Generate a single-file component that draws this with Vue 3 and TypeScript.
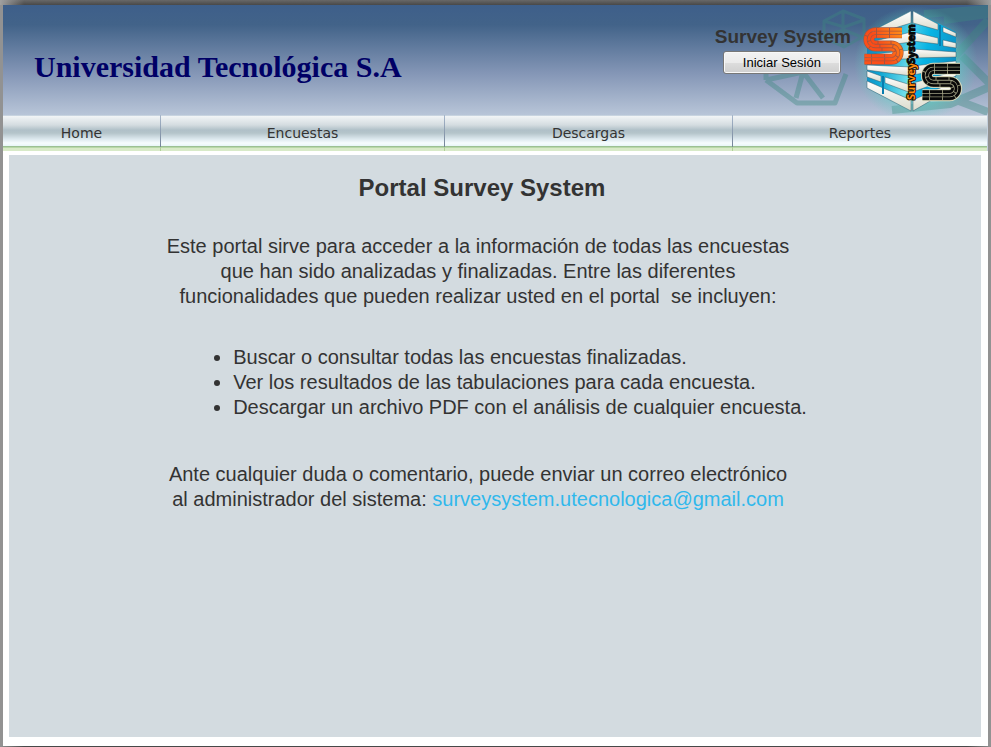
<script setup lang="ts">
interface NavItem {
  label: string
  href: string
}

const navItems: NavItem[] = [
  { label: 'Home', href: '#home' },
  { label: 'Encuestas', href: '#encuestas' },
  { label: 'Descargas', href: '#descargas' },
  { label: 'Reportes', href: '#reportes' },
]

const features: string[] = [
  'Buscar o consultar todas las encuestas finalizadas.',
  'Ver los resultados de las tabulaciones para cada encuesta.',
  'Descargar un archivo PDF con el análisis de cualquier encuesta.',
]

// The three parallel lanes that make up each "S" of the logo
const lanes: string[] = [
  'M902 29.3H875.5A10.1 10.1 0 0 0 875.5 49.5H891.5A3.1 3.1 0 0 1 891.5 55.7H864.5',
  'M902 32.8H875.5A6.6 6.6 0 0 0 875.5 46H891.5A6.6 6.6 0 0 1 891.5 59.2H864.5',
  'M902 36.3H875.5A3.1 3.1 0 0 0 875.5 42.5H891.5A10.1 10.1 0 0 1 891.5 62.7H864.5',
]
</script>

<template>
  <div class="page">
    <header class="banner">
      <h1 class="university">Universidad Tecnológica S.A</h1>
      <div class="session">
        <strong class="system">Survey System</strong>
        <button type="button" class="login">Iniciar Sesión</button>
      </div>
      <svg class="art" viewBox="760 5 228 110" aria-hidden="true">
        <defs>
          <linearGradient id="orange" gradientUnits="userSpaceOnUse" x1="864" y1="56" x2="903" y2="36">
            <stop offset="0" stop-color="#ff5216" />
            <stop offset="0.4" stop-color="#fa4a18" />
            <stop offset="1" stop-color="#ff8c18" />
          </linearGradient>
          <linearGradient id="glassLeft" x1="0" y1="0" x2="1" y2="0.5">
            <stop offset="0" stop-color="#1478b4" />
            <stop offset="0.5" stop-color="#10a8d4" />
            <stop offset="1" stop-color="#6cdcea" />
          </linearGradient>
          <linearGradient id="glassRight" x1="0" y1="0" x2="1" y2="0.6">
            <stop offset="0" stop-color="#58d4ea" />
            <stop offset="0.4" stop-color="#08b4e4" />
            <stop offset="1" stop-color="#108cc0" />
          </linearGradient>
          <linearGradient id="slat" x1="0" y1="0" x2="0" y2="1">
            <stop offset="0" stop-color="#ffffff" />
            <stop offset="1" stop-color="#dcdccc" />
          </linearGradient>
          <radialGradient id="glow">
            <stop offset="0.5" stop-color="#5ce0d8" stop-opacity="0.8" />
            <stop offset="1" stop-color="#5cc8b8" stop-opacity="0" />
          </radialGradient>
          <filter id="soft"><feGaussianBlur stdDeviation="0.7" /></filter>
        </defs>
        <g class="frames" filter="url(#soft)">
          <path d="M824 21L843 11L864 19V36L844 47L824 38ZM824 21L844 27L864 20M843 11V45M824 36L844 30L864 38" stroke-width="3" />
          <path d="M774 54L806 58V72L788 66ZM806 56L830 66" stroke-width="4" />
          <path d="M766 80L797 103H835L846 74M766 80L803 72L823 98M803 72L796 98M766 80V73" stroke-width="5" />
          <path d="M924 14L988 9M944 20L988 14M988 20L948 64M962 56L992 86L950 104L892 110M930 90L988 112" stroke-width="8" />
        </g>
        <ellipse cx="916" cy="64" rx="62" ry="58" fill="url(#glow)" />
        <path d="M911 11L867 33V88L911 111Z" fill="url(#glassLeft)" />
        <path d="M913 11L956 32V85L913 111Z" fill="url(#glassRight)" />
        <g fill="url(#slat)" stroke="#305868" stroke-width="0.5">
          <path d="M911 11V23L872 35V31Z" />
          <path d="M911 32V42L867 48V43Z" />
          <path d="M911 50V59L867 59V55Z" />
          <path d="M911 67V76L867 70V65Z" />
          <path d="M911 85V93L885 83V77Z" />
          <path d="M881 76V82L867 77V71Z" />
          <path d="M911 100V111L867 88V81Z" />
          <path d="M913 11L938 24V30L913 23Z" />
          <path d="M943 27L956 33V37L943 32Z" />
          <path d="M913 32L938 38V44L913 41Z" />
          <path d="M943 40L956 43V48L943 46Z" />
          <path d="M913 49L956 52V57L913 58Z" />
          <path d="M913 66L956 61V67L913 75Z" />
          <path d="M913 83L956 71V76L913 92Z" />
          <path d="M913 100L956 81V86L913 111Z" />
        </g>
        <path d="M883 76V94M940 25V46" stroke="#087cae" stroke-width="2" />
        <g fill="none">
          <path v-for="lane in lanes" :key="lane" :d="lane" stroke="#a8543c" stroke-width="4" />
          <path v-for="lane in lanes" :key="lane" :d="lane" stroke="url(#orange)" stroke-width="2.7" stroke-dasharray="12 1" />
        </g>
        <g fill="none" transform="translate(58 36)">
          <path v-for="lane in lanes" :key="lane" :d="lane" stroke="#e4e4c8" stroke-width="5" />
          <path v-for="lane in lanes" :key="lane" :d="lane" stroke="#8c8c70" stroke-width="3.5" />
          <path v-for="lane in lanes" :key="lane" :d="lane" stroke="#080808" stroke-width="2.7" stroke-dasharray="12 1" />
        </g>
        <g class="mark" transform="translate(915 100) rotate(-90)">
          <text class="mark-survey">Survey</text>
          <text class="mark-system" x="36">System</text>
        </g>
      </svg>
    </header>

    <nav class="menu" aria-label="Principal">
      <a v-for="item in navItems" :key="item.label" :href="item.href">{{ item.label }}</a>
    </nav>

    <main class="content">
      <h2>Portal Survey System</h2>
      <div class="copy">
        <p>
          Este portal sirve para acceder a la información de todas las encuestas<br />
          que han sido analizadas y finalizadas. Entre las diferentes<br />
          funcionalidades que pueden realizar usted en el portal&nbsp; se incluyen:
        </p>
        <ul>
          <li v-for="feature in features" :key="feature">{{ feature }}</li>
        </ul>
        <p>
          Ante cualquier duda o comentario, puede enviar un correo electrónico<br />
          al administrador del sistema:
          <a href="mailto:surveysystem.utecnologica@gmail.com">surveysystem.utecnologica@gmail.com</a>
        </p>
      </div>
    </main>
  </div>
</template>

<style>
body {
  background:
    linear-gradient(90deg, #a0a0a0, transparent 24px calc(100% - 24px), #a0a0a0) 0 0 / 100% 5px no-repeat,
    linear-gradient(#686868, #484848) 0 0 / 100% 5px no-repeat,
    linear-gradient(90deg, #929292, #484848 24px calc(100% - 24px), #929292) 0 100% / 100% 1px no-repeat,
    #929292;
}
</style>

<style scoped>
.page {
  box-sizing: border-box;
  min-height: 100vh;
  display: flex;
  flex-direction: column;
  border: solid transparent;
  border-width: 5px 3px 1px;
  background: #fff padding-box;
  color: #333;
  font-family: "Liberation Sans", Arial, sans-serif;
}

.banner {
  display: flex;
  height: 110px;
  position: relative;
  background: linear-gradient(#3e5f8a, #426389 18%, #8496b6 62%, #b8c5d8);
}

.university {
  margin: 44px 0 0 31px;
  color: #000066;
  font: bold 30px/36px "Liberation Serif", "Times New Roman", serif;
}

.session {
  position: relative;
  z-index: 1;
  display: flex;
  flex-direction: column;
  align-items: center;
  margin: 20px 137px 0 auto;
}

.system {
  font-size: 19px;
  line-height: 24px;
}

.login {
  width: 118px;
  height: 23px;
  margin-top: 2px;
  margin-right: 2px;
  padding: 0;
  border: 1px solid #777;
  border-radius: 3px;
  box-shadow: inset 0 0 0 1px #f8f8f8;
  background: linear-gradient(#f2f2f2, #ebebeb 50%, #dddddd 50%, #cfcfcf);
  color: #000;
  font: 13px "Liberation Sans", Arial, sans-serif;
}

.art {
  position: absolute;
  top: 0;
  right: 0;
  width: 228px;
  height: 110px;
}

.frames {
  fill: none;
  stroke: #3c8880;
  stroke-linejoin: round;
  opacity: 0.4;
}

.mark {
  font: bold 11px "Open Sans", sans-serif;
}

.mark-survey {
  fill: #ff8c10;
  stroke: #201000;
  stroke-width: 2px;
  paint-order: stroke;
}

.mark-system {
  fill: #080808;
  stroke: #080808;
  stroke-width: 1px;
}

.menu {
  display: grid;
  grid-template-columns: 158fr 284fr 288fr 255fr;
  height: 36px;
  background: linear-gradient(
    #c8d4e0 0 1px, #f2f5f7 1px, #d4dce0 10px, #b0c0c8 15px, #b4c4ca 18px,
    #dce8ee 24px, #f6fcfe 28px, #e8f6f8 31px, #9cc094 31px 32px, #b8d8a8 32px 33px, #d8eac8 33px
  );
}

.menu a {
  padding-top: 1px;
  border-right: 1px solid;
  border-image: linear-gradient(#a8b8cc, #748498 31px, #b0d098 31px) 1;
  color: #333;
  font: 14px/34px "DejaVu Sans", Verdana, sans-serif;
  text-align: center;
  text-decoration: none;
}

.menu a:last-child {
  border-image: none;
  border-right-color: #c4d0dc;
}

.content {
  flex: 1;
  margin: 4px 7px 9px 6px;
  background: #d3dbe0;
}

.content h2 {
  margin: 18px 26px 0 0;
  font-size: 24px;
  line-height: 30px;
  text-align: center;
}

.copy {
  margin: 31px 34px 0 0;
  font-size: 20px;
  line-height: 25px;
}

.copy p {
  margin: 0;
  text-align: center;
}

.copy ul {
  width: fit-content;
  margin: 36px auto 42px;
  padding-left: 84px;
}

.copy a {
  color: #30b8ec;
  text-decoration: none;
}
</style>
